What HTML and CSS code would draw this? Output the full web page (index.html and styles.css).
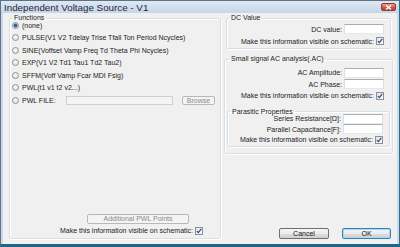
FILE: index.html
```html
<!DOCTYPE html>
<html lang="en">
<head>
    <meta charset="UTF-8">
    <title>Independent Voltage Source - V1</title>
    <link rel="stylesheet" href="styles.css">
</head>
<body>
    <div class="window">
        <div class="titlebar">
            <span class="title">Independent Voltage Source - V1</span>
            <span class="close">
                <svg width="7" height="5" viewBox="0 0 7 5"><path d="M1 0.5 L6 4.5 M6 0.5 L1 4.5" stroke="#fff" stroke-width="1.4"/></svg>
            </span>
        </div>
        <div class="client">
            <fieldset class="group functions">
                <legend>Functions</legend>
                <div class="func-list">
                    <label class="func"><input type="radio" name="fn" checked>(none)</label>
                    <label class="func"><input type="radio" name="fn">PULSE(V1 V2 Tdelay Trise Tfall Ton Period Ncycles)</label>
                    <label class="func"><input type="radio" name="fn">SINE(Voffset Vamp Freq Td Theta Phi Ncycles)</label>
                    <label class="func"><input type="radio" name="fn">EXP(V1 V2 Td1 Tau1 Td2 Tau2)</label>
                    <label class="func"><input type="radio" name="fn">SFFM(Voff Vamp Fcar MDI Fsig)</label>
                    <label class="func"><input type="radio" name="fn">PWL(t1 v1 t2 v2...)</label>
                    <div class="func file-row">
                        <label class="file-label"><input type="radio" name="fn">PWL FILE:</label>
                        <input type="text" class="text file-input" disabled>
                        <button class="btn browse" disabled>Browse</button>
                    </div>
                </div>
                <button class="btn pwl-points" disabled>Additional PWL Points</button>
                <div class="visible left-visible">Make this information visible on schematic:
                    <span class="check"><svg width="6" height="6" viewBox="0 0 6 6"><path d="M0.8 3 L2.3 4.7 L5.3 0.8" fill="none" stroke="#2a3f8f" stroke-width="1.1"/></svg></span>
                </div>
            </fieldset>

            <div class="side">
                <fieldset class="group dc">
                    <legend>DC Value</legend>
                    <div class="row"><span>DC value:</span><input type="text" class="text"></div>
                    <div class="visible">Make this information visible on schematic:
                        <span class="check"><svg width="6" height="6" viewBox="0 0 6 6"><path d="M0.8 3 L2.3 4.7 L5.3 0.8" fill="none" stroke="#2a3f8f" stroke-width="1.1"/></svg></span>
                    </div>
                </fieldset>

                <fieldset class="group ac">
                    <legend>Small signal AC analysis(.AC)</legend>
                    <div class="row"><span>AC Amplitude:</span><input type="text" class="text"></div>
                    <div class="row"><span>AC Phase:</span><input type="text" class="text"></div>
                    <div class="visible">Make this information visible on schematic:
                        <span class="check"><svg width="6" height="6" viewBox="0 0 6 6"><path d="M0.8 3 L2.3 4.7 L5.3 0.8" fill="none" stroke="#2a3f8f" stroke-width="1.1"/></svg></span>
                    </div>

                    <fieldset class="group parasitic">
                        <legend>Parasitic Properties</legend>
                        <div class="row first"><span>Series Resistance[&Omega;]:</span><input type="text" class="text"></div>
                        <div class="row"><span>Parallel Capacitance[F]:</span><input type="text" class="text"></div>
                        <div class="visible">Make this information visible on schematic:
                            <span class="check"><svg width="6" height="6" viewBox="0 0 6 6"><path d="M0.8 3 L2.3 4.7 L5.3 0.8" fill="none" stroke="#2a3f8f" stroke-width="1.1"/></svg></span>
                        </div>
                    </fieldset>
                </fieldset>

                <div class="actions">
                    <button class="btn cancel">Cancel</button>
                    <button class="btn ok">OK</button>
                </div>
            </div>
        </div>
    </div>
</body>
</html>
```

FILE: styles.css
```css
*{
    margin: 0;
    padding: 0;
    box-sizing: border-box;
}
:root{
    --face: #f0f0f0;
    --group-line: #d5dfe5;
    --text: #1b1b1b;
    --font: "Liberation Sans", Arial, sans-serif;
}
body{
    width: 400px;
    height: 247px;
    overflow: hidden;
    font-family: var(--font);
    font-size: 7px;
    color: var(--text);
    background: #c9d8ea;
}
.window{
    width: 400px;
    height: 247px;
    display: flex;
    flex-direction: column;
    background: #cbd9ea;
    border: 1px solid #5d7286;
    border-right-color: #2b6f8d;
    border-bottom: 3px solid #1d6784;
}
.titlebar{
    height: 12px;
    display: flex;
    align-items: center;
    justify-content: space-between;
    padding: 0 3px 0 3px;
    background: linear-gradient(#dfe8f3, #c7d6e8);
}
.title{
    font-size: 9.8px;
    color: #1e2935;
}
.close{
    width: 15px;
    height: 8px;
    display: flex;
    align-items: center;
    justify-content: center;
    border: 1px solid #8a3a30;
    border-radius: 2px;
    background: linear-gradient(#e9a597, #cf5a48 55%, #c0402e);
}
.client{
    flex: 1;
    display: flex;
    margin: 0 2px;
    padding: 1px 3px 5px 6px;
    background: var(--face);
}

/* group boxes */
.group{
    border: 1px solid var(--group-line);
    border-radius: 2px;
    box-shadow: inset 1px 1px 0 #fff, 1px 1px 0 #fff;
    min-width: 0;
}
.group legend{
    padding: 0 2px;
    line-height: 8px;
}
.functions{
    width: 212px;
    display: flex;
    flex-direction: column;
    padding: 0 0 3px 2px;
}
.func-list{
    display: flex;
    flex-direction: column;
    margin-top: -3px;
}
.func{
    height: 12.5px;
    display: flex;
    align-items: center;
    gap: 3px;
}
input[type="radio"]{
    appearance: none;
    width: 7px;
    height: 7px;
    border: 1px solid #939393;
    border-radius: 50%;
    background: radial-gradient(circle at 50% 40%, #fdfdfd, #d6d6d6);
    flex: none;
}
input[type="radio"]:checked{
    background: radial-gradient(circle, #2c64b8 0 1.6px, #bcd0ea 2.2px, #f2f2f2 3px);
}
.file-row{
    gap: 0;
}
.file-label{
    display: flex;
    align-items: center;
    gap: 3px;
    width: 54px;
}
.text{
    width: 40px;
    height: 10px;
    border: 1px solid #abadb3;
    border-left-color: #dbdfe6;
    border-right-color: #dbdfe6;
    border-bottom-color: #e3e9ef;
    background: #fff;
    font-family: var(--font);
    font-size: 7px;
}
.file-input{
    width: 107px;
    height: 9px;
    background: #f4f4f4;
    border-color: #cfcfcf;
}
.btn{
    font-family: var(--font);
    font-size: 7px;
    color: #111;
    border: 1px solid #707070;
    border-radius: 2px;
    background: linear-gradient(#f6f6f6, #ebebeb 50%, #dddddd 51%, #d0d0d0);
}
.btn:disabled{
    color: #8a8a8a;
    border-color: #b5b9bc;
    background: #f4f4f4;
}
.browse{
    width: 33px;
    height: 9px;
    margin-left: 9px;
    line-height: 7px;
}
.pwl-points{
    align-self: flex-end;
    width: 102px;
    height: 10px;
    margin: auto 31px 2px 0;
    line-height: 8px;
}
.visible{
    display: flex;
    align-items: center;
    justify-content: flex-end;
    gap: 2px;
    height: 12px;
}
.left-visible{
    padding-right: 17px;
    height: 9px;
}
.check{
    width: 8px;
    height: 8px;
    display: flex;
    align-items: center;
    justify-content: center;
    border: 1px solid #8f8f8f;
    background: linear-gradient(135deg, #e3e3e3, #fbfbfb);
}

/* right column */
.side{
    width: 170px;
    margin-left: 3px;
    display: flex;
    flex-direction: column;
}
.row{
    height: 12px;
    display: flex;
    align-items: center;
    justify-content: flex-end;
    gap: 2px;
}
.dc{
    margin: 0 3px 0 2px;
    padding: 1px 6px 1px 2px;
}
.ac{
    margin: 6px 1px 0 0;
    padding: 4px 8px 6px 4px;
}
.ac > .row{
    height: 11.5px;
}
.ac > .visible{
    height: 11.5px;
}
.parasitic{
    margin: 6px -6px 0 -2px;
    padding: 0 6px 1px 2px;
}
.parasitic .row,
.parasitic .visible{
    height: 10.5px;
}
.parasitic .first{
    margin-top: -2px;
}
.actions{
    margin-top: auto;
    display: flex;
    justify-content: flex-end;
    gap: 13px;
    padding-right: 3px;
}
.cancel,
.ok{
    height: 11px;
    line-height: 9px;
}
.cancel{
    width: 50px;
}
.ok{
    width: 49px;
    border-color: #3c7fb1;
    box-shadow: inset 0 0 0 1px #9fdcf7;
}
```
